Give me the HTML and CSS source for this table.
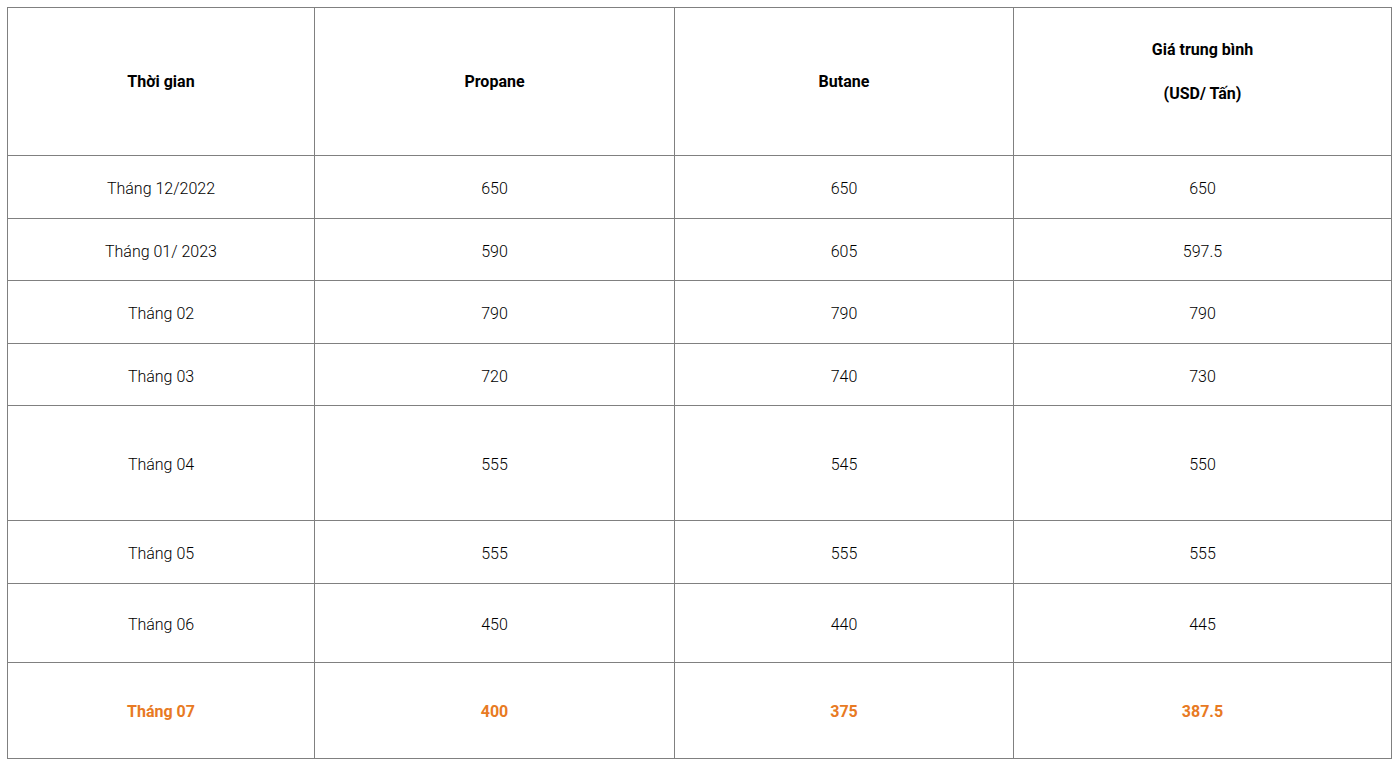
FILE: index.html
```html
<!DOCTYPE html>
<html lang="vi">
<head>
<meta charset="utf-8">
<title>Giá LPG</title>
<link rel="stylesheet" href="styles.css">
</head>
<body>
<table class="price-table">
  <colgroup>
    <col class="c1"><col class="c2"><col class="c3"><col class="c4">
  </colgroup>
  <thead>
    <tr class="r-head">
      <th>Thời gian</th>
      <th>Propane</th>
      <th>Butane</th>
      <th><p>Giá trung bình</p><p>(USD/ Tấn)</p></th>
    </tr>
  </thead>
  <tbody>
    <tr class="r-63"><td>Tháng 12/2022</td><td>650</td><td>650</td><td>650</td></tr>
    <tr class="r-62"><td>Tháng 01/ 2023</td><td>590</td><td>605</td><td>597.5</td></tr>
    <tr class="r-63"><td>Tháng 02</td><td>790</td><td>790</td><td>790</td></tr>
    <tr class="r-62"><td>Tháng 03</td><td>720</td><td>740</td><td>730</td></tr>
    <tr class="r-115"><td>Tháng 04</td><td>555</td><td>545</td><td>550</td></tr>
    <tr class="r-63"><td>Tháng 05</td><td>555</td><td>555</td><td>555</td></tr>
    <tr class="r-79"><td>Tháng 06</td><td>450</td><td>440</td><td>445</td></tr>
    <tr class="r-96 highlight"><td>Tháng 07</td><td>400</td><td>375</td><td>387.5</td></tr>
  </tbody>
</table>
</body>
</html>
```
FILE: styles.css
```css
html, body {
  margin: 0;
  padding: 0;
  background: #ffffff;
}
body {
  padding: 7px 0 0 7px;
  font-family: Roboto, "Noto Sans", sans-serif;
  font-size: 16px;
  color: #000000;
}
.price-table {
  border-collapse: collapse;
  table-layout: fixed;
  width: 1385px;
}
.c1 { width: 307px; }
.c2 { width: 360px; }
.c3 { width: 339px; }
.c4 { width: 378px; }
.price-table th,
.price-table td {
  border: 1px solid #808080;
  text-align: center;
  vertical-align: middle;
  padding: 4px 0 0;
  line-height: 20px;
}
.price-table td {
  font-weight: 300;
  color: #000;
}
.price-table th {
  font-weight: 700;
  color: #000;
  padding: 0;
}
.price-table th p {
  margin: 0 0 16px;
  line-height: 28px;
}
.price-table th p:last-child {
  margin-bottom: 20px;
}
.r-head { height: 148px; }
.r-62 { height: 62px; }
.r-63 { height: 63px; }
.r-79 { height: 79px; }
.r-96 { height: 96px; }
.r-115 { height: 115px; }
.price-table .highlight td {
  color: #e87a23;
  font-weight: 700;
  padding-top: 2px;
}
```
